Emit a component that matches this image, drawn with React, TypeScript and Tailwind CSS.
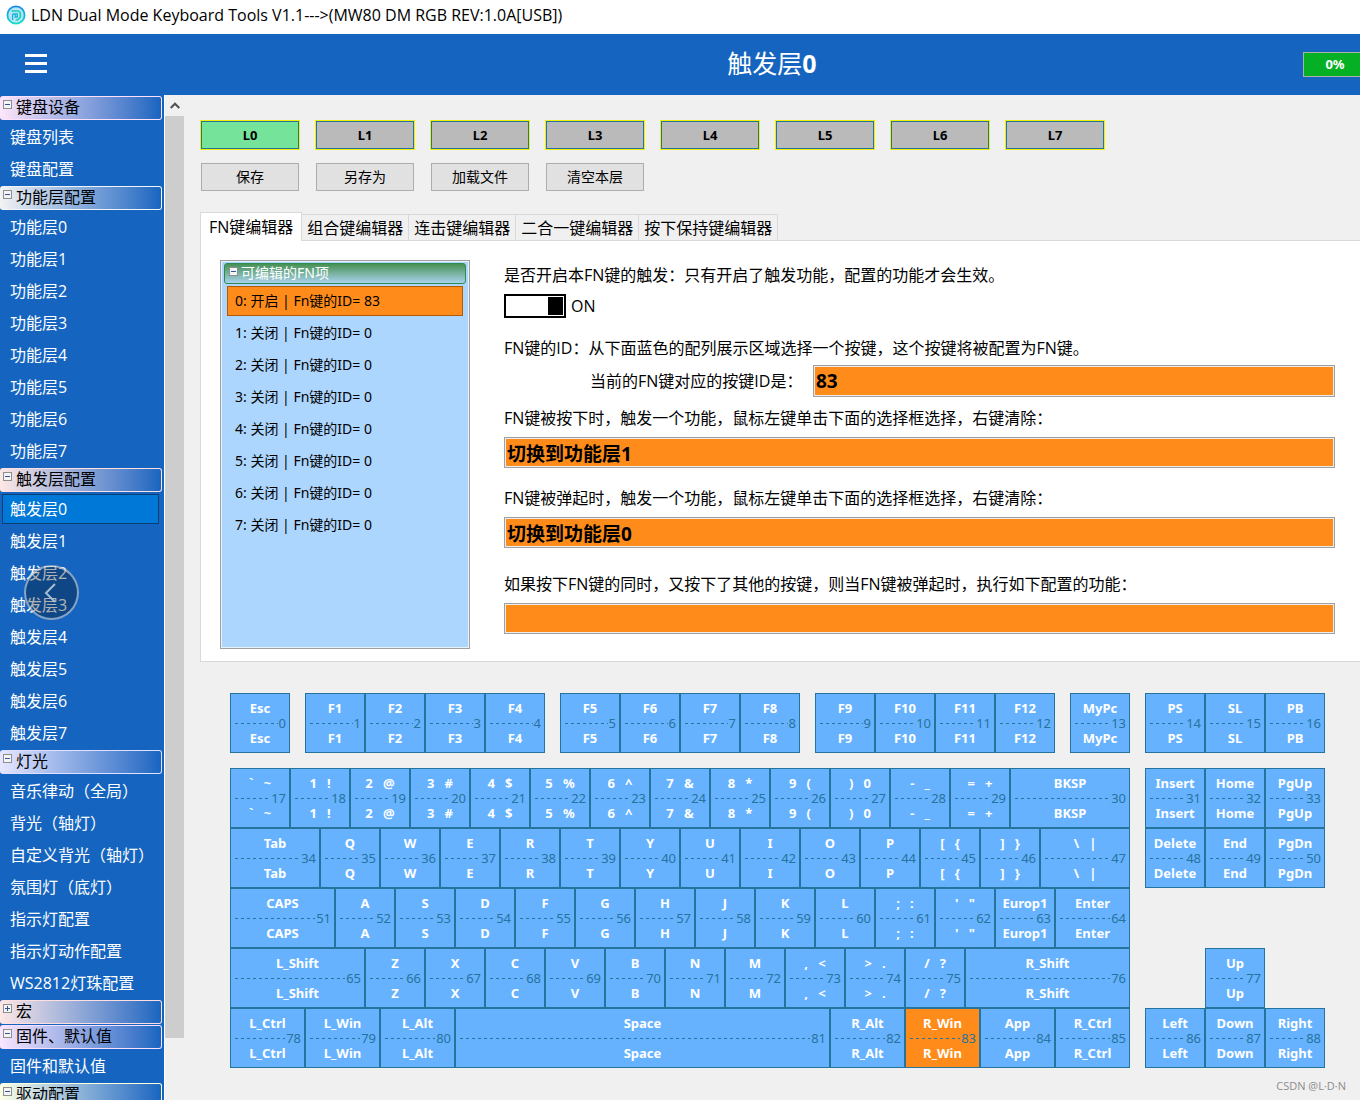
import { useState } from "react";
import type { ReactNode } from "react";

const ui = "font-['Open_Sans','Noto_Sans_CJK_SC',sans-serif]";
const dense = "font-['Noto_Sans','Noto_Sans_CJK_SC',sans-serif]";

type Group = { title: string; tint: string; edge: string; items: string[]; closed?: boolean };

const numbered = (name: string) => Array.from({ length: 8 }, (_, i) => name + i);

const groups: Group[] = [
  { title: "键盘设备", tint: "from-[#ffe6fa]", edge: "border-[#ffe0fa]", items: ["键盘列表", "键盘配置"] },
  { title: "功能层配置", tint: "from-[#f3f3f3]", edge: "border-[#f0f4f8]", items: numbered("功能层") },
  { title: "触发层配置", tint: "from-[#ffe8e6]", edge: "border-[#ffe0e0]", items: numbered("触发层") },
  {
    title: "灯光",
    tint: "from-[#e8e6ff]",
    edge: "border-[#dfe0ff]",
    items: ["音乐律动（全局）", "背光（轴灯）", "自定义背光（轴灯）", "氛围灯（底灯）", "指示灯配置", "指示灯动作配置", "WS2812灯珠配置"],
  },
  { title: "宏", tint: "from-[#ffe8e6]", edge: "border-[#ffe0e0]", items: [], closed: true },
  { title: "固件、默认值", tint: "from-[#fbe6ff]", edge: "border-[#fae0ff]", items: ["固件和默认值"] },
  { title: "驱动配置", tint: "from-[#fcffe6]", edge: "border-[#fcffe0]", items: [] },
];

function Expander({ closed }: { closed?: boolean }) {
  return (
    <svg viewBox="0 0 9 9" className="size-[9px] shrink-0" aria-hidden="true" shapeRendering="crispEdges">
      <rect x="0.5" y="0.5" width="8" height="8" rx="1" fill="#f4f4f4" stroke="#8e8f8f" />
      <path d={closed ? "M2 4.5h5M4.5 2v5" : "M2 4.5h5"} stroke="#33539c" />
    </svg>
  );
}

function Sidebar({ selected, onSelect }: { selected: string; onSelect: (s: string) => void }) {
  return (
    <nav className="w-[164px] shrink-0 overflow-hidden bg-[#1565c0] pt-px">
      {groups.map((g) => (
        <section key={g.title} className={`flex flex-col ${g.closed ? "" : "pb-px"}`}>
          <h2 className={`mb-px mr-0.5 flex h-6 rounded-[3px] border border-l-0 bg-linear-to-r to-[#1565c0] ${g.tint} ${g.edge}`}>
            <button className="flex w-full items-start gap-1 pl-[3px] text-left text-base leading-5 text-black">
              <span className="flex pt-[3px]">
                <Expander closed={g.closed} />
              </span>
              {g.title}
            </button>
          </h2>
          {g.items.map((item) => (
            <button
              key={item}
              onClick={() => onSelect(item)}
              className={`mx-0.5 my-px flex h-[30px] w-[157px] items-center whitespace-nowrap border pl-[7px] text-base text-white ${
                item === selected ? "border-[#0a3f73] bg-[#0078d7]" : "border-transparent"
              }`}
            >
              {item}
            </button>
          ))}
        </section>
      ))}
    </nav>
  );
}

function ScrollTrack() {
  return (
    <div className="flex w-5 shrink-0 flex-col border-l border-white bg-[#f0f0f0]">
      <button aria-label="向上滚动" className="flex h-[21px] items-center justify-center">
        <svg viewBox="0 0 10 7" className="h-[7px] w-2.5" fill="none" stroke="#505050" strokeWidth="2" aria-hidden="true">
          <path d="M0.7 6L5 1.7L9.3 6" />
        </svg>
      </button>
      <div className="h-[922px] bg-[#cdcdcd]" />
    </div>
  );
}

const tabs = ["FN键编辑器", "组合键编辑器", "连击键编辑器", "二合一键编辑器", "按下保持键编辑器"];

function Field({ id, value, height }: { id: string; value: string; height: string }) {
  return (
    <input
      id={id}
      defaultValue={value}
      className={`block min-w-0 flex-1 border border-[#a0a0a0] bg-[#ff8c1a] px-0.5 text-[19px] leading-none font-bold text-black outline-none inset-ring inset-ring-[#ececec] ${height}`}
    />
  );
}

function FnList() {
  const [row, setRow] = useState(0);
  return (
    <div className="h-[389px] w-[250px] shrink-0 border border-[#a0a0a0] bg-[#e8f2fb] p-px">
      <div className={`h-full bg-[#add6ff] px-0.5 pt-px text-sm ${dense}`}>
        <h3 className="flex h-[21px] items-start gap-[3px] rounded-[3px] border border-[#2f8a4e] bg-linear-to-b from-[#479153] to-[#a9d2ee] pl-1 text-sm leading-[18px] font-normal text-white">
          <span className="flex pt-[3px]">
            <Expander />
          </span>
          可编辑的FN项
        </h3>
        <ul className="px-[3px] pt-px">
          {Array.from({ length: 8 }, (_, i) => (
            <li key={i} className="py-px">
              <button
                onClick={() => setRow(i)}
                className={`flex h-[30px] w-full items-center whitespace-pre border pl-[7px] text-black ${
                  row === i ? "border-[#b35900] bg-[#ff8c1a]" : "border-transparent"
                }`}
              >
                {i === 0 ? "0: 开启 | Fn键的ID= 83" : `${i}: 关闭 | Fn键的ID= 0`}
              </button>
            </li>
          ))}
        </ul>
      </div>
    </div>
  );
}

function FnForm() {
  return (
    <div className="min-w-0 flex-1 text-base leading-6 text-black">
      <p className="pt-[3px]">是否开启本FN键的触发：只有开启了触发功能，配置的功能才会生效。</p>
      <label className="mt-[7px] flex h-6 w-fit cursor-pointer items-center gap-[5px]">
        <input type="checkbox" role="switch" defaultChecked className="peer sr-only" />
        <span className="flex h-6 w-[62px] justify-start border-2 border-black bg-white p-px peer-checked:justify-end">
          <span className="w-[15px] bg-black" />
        </span>
        ON
      </label>
      <p className="mt-[18px]">FN键的ID：从下面蓝色的配列展示区域选择一个按键，这个按键将被配置为FN键。</p>
      <div className="mt-[5px] flex items-center pl-[86px]">
        <label htmlFor="key-id" className="w-[223px] shrink-0">
          当前的FN键对应的按键ID是：
        </label>
        <Field id="key-id" value="83" height="h-8" />
      </div>
      <label htmlFor="press" className="mt-[9px] block">
        FN键被按下时，触发一个功能，鼠标左键单击下面的选择框选择，右键清除：
      </label>
      <div className="mt-[7px] flex">
        <Field id="press" value="切换到功能层1" height="h-[31px]" />
      </div>
      <label htmlFor="release" className="mt-[18px] block">
        FN键被弹起时，触发一个功能，鼠标左键单击下面的选择框选择，右键清除：
      </label>
      <div className="mt-[7px] flex">
        <Field id="release" value="切换到功能层0" height="h-[31px]" />
      </div>
      <label htmlFor="combo" className="mt-6 block">
        如果按下FN键的同时，又按下了其他的按键，则当FN键被弹起时，执行如下配置的功能：
      </label>
      <div className="mt-[7px] flex">
        <Field id="combo" value="" height="h-[31px]" />
      </div>
    </div>
  );
}

type Cell = [label: string, units: number] | number;

/* Widths are in quarter units of a standard key; a bare number is an empty gap. */
const rows: { first: number; cells: Cell[] }[] = [
  {
    first: 0,
    cells: [
      ["Esc", 4], 1, ["F1", 4], ["F2", 4], ["F3", 4], ["F4", 4], 1, ["F5", 4], ["F6", 4], ["F7", 4], ["F8", 4], 1,
      ["F9", 4], ["F10", 4], ["F11", 4], ["F12", 4], 1, ["MyPc", 4], 1, ["PS", 4], ["SL", 4], ["PB", 4],
    ],
  },
  {
    first: 17,
    cells: [
      ["`   ~", 4], ["1   !", 4], ["2   @", 4], ["3   #", 4], ["4   $", 4], ["5   %", 4], ["6   ^", 4], ["7   &", 4],
      ["8   *", 4], ["9   (", 4], [")   0", 4], ["-   _", 4], ["=   +", 4], ["BKSP", 8], 1, ["Insert", 4], ["Home", 4],
      ["PgUp", 4],
    ],
  },
  {
    first: 34,
    cells: [
      ["Tab", 6], ["Q", 4], ["W", 4], ["E", 4], ["R", 4], ["T", 4], ["Y", 4], ["U", 4], ["I", 4], ["O", 4], ["P", 4],
      ["[   {", 4], ["]   }", 4], ["\\   |", 6], 1, ["Delete", 4], ["End", 4], ["PgDn", 4],
    ],
  },
  {
    first: 51,
    cells: [
      ["CAPS", 7], ["A", 4], ["S", 4], ["D", 4], ["F", 4], ["G", 4], ["H", 4], ["J", 4], ["K", 4], ["L", 4],
      [";   :", 4], ["'   \"", 4], ["Europ1", 4], ["Enter", 5],
    ],
  },
  {
    first: 65,
    cells: [
      ["L_Shift", 9], ["Z", 4], ["X", 4], ["C", 4], ["V", 4], ["B", 4], ["N", 4], ["M", 4], [",   <", 4], [">   .", 4],
      ["/   ?", 4], ["R_Shift", 11], 5, ["Up", 4],
    ],
  },
  {
    first: 78,
    cells: [
      ["L_Ctrl", 5], ["L_Win", 5], ["L_Alt", 5], ["Space", 25], ["R_Alt", 5], ["R_Win", 5], ["App", 5], ["R_Ctrl", 5], 1,
      ["Left", 4], ["Down", 4], ["Right", 4],
    ],
  },
];

function Key({ label, id, units, active, onPick }: { label: string; id: number; units: number; active: boolean; onPick: () => void }) {
  return (
    <button
      onClick={onPick}
      style={{ gridColumn: `span ${units}` }}
      className={`flex h-[60px] min-w-0 flex-col justify-center border border-[#26739c] text-[13px] leading-[15px] whitespace-pre text-white ${
        active ? "bg-[#ff8c1a]" : "bg-[#66b2ff]"
      }`}
    >
      <span className="w-full text-center font-bold">{label}</span>
      <span className="flex w-full items-center gap-px pr-[3px] pl-1 text-[#26739c]">
        <svg className="h-px min-w-0 flex-1" aria-hidden="true" shapeRendering="crispEdges">
          <line x1="0" y1="0.5" x2="100%" y2="0.5" stroke="#26739c" strokeDasharray="3 3" />
        </svg>
        {id}
      </span>
      <span className="w-full text-center font-bold">{label}</span>
    </button>
  );
}

function Keyboard() {
  const [picked, setPicked] = useState(83);
  return (
    <div className={`mr-[35px] ml-[46px] pt-[31px] ${dense}`}>
      {rows.map((row, r) => {
        let next = row.first;
        return (
          <div key={r} className={`grid grid-cols-[repeat(73,minmax(0,1fr))] ${r === 0 ? "mb-[15px]" : ""}`}>
            {row.cells.map((cell, c): ReactNode => {
              if (typeof cell === "number") return <span key={c} style={{ gridColumn: `span ${cell}` }} />;
              const id = next++;
              return <Key key={c} label={cell[0]} units={cell[1]} id={id} active={picked === id} onPick={() => setPicked(id)} />;
            })}
          </div>
        );
      })}
    </div>
  );
}

export default function App() {
  const [page, setPage] = useState("触发层0");
  const [layer, setLayer] = useState(0);
  const [tab, setTab] = useState(0);
  return (
    <div className={`flex h-screen flex-col overflow-hidden bg-[#f0f0f0] text-black ${ui}`}>
      <header className="shrink-0">
        <div className="flex h-[34px] items-center gap-[5px] bg-white pb-1 pl-1.5">
          <svg viewBox="0 0 20 20" className="size-5" aria-hidden="true">
            <defs>
              <linearGradient id="ring" x1="0" y1="0" x2="0" y2="1">
                <stop offset="0" stopColor="#1787f0" />
                <stop offset="1" stopColor="#12e0c8" />
              </linearGradient>
            </defs>
            <circle cx="10" cy="10" r="8.6" fill="#b4e6f5" stroke="url(#ring)" strokeWidth="1.8" />
            <path d="M5.5 6H12.5L14.3 7.8V12.2L11.8 14.8H9.8" fill="none" stroke="#12d3b4" strokeWidth="1.6" />
            <path d="M6.6 15V9M6.6 9H11.3V12H9.2V9" fill="none" stroke="#1ab4d8" strokeWidth="1.3" />
          </svg>
          <span className="text-base leading-5">LDN Dual Mode Keyboard Tools V1.1---&gt;(MW80 DM RGB REV:1.0A[USB])</span>
        </div>
        <div className="grid h-[61px] grid-cols-[1fr_auto_1fr] items-center bg-[#1565c0]">
          <button aria-label="菜单" className="mb-0.5 ml-[25px] flex w-[22px] flex-col gap-[5px]">
            <span className="h-[3px] bg-white" />
            <span className="h-[3px] bg-white" />
            <span className="h-[3px] bg-white" />
          </button>
          <h1 className="pb-1 pl-[184px] text-[25px] leading-9 text-white">
            触发层<b>0</b>
          </h1>
          <output className={`flex h-[25px] w-[57px] items-center justify-center justify-self-end border border-r-0 border-[#a8b4a8] bg-[#06b025] pl-1.5 text-[13px] font-bold text-white ${dense}`}>
            0%
          </output>
        </div>
      </header>
      <div className="flex min-h-0 flex-1">
        <Sidebar selected={page} onSelect={setPage} />
        <ScrollTrack />
        <main className="min-w-0 flex-1 pt-[25px]">
          <div className="flex gap-[15px] pl-4">
            {Array.from({ length: 8 }, (_, i) => (
              <button
                key={i}
                onClick={() => setLayer(i)}
                className={`h-[30px] w-[100px] border border-[#f0f000] pt-0.5 text-[13px] font-bold inset-ring inset-ring-[#26739c] ${dense} ${
                  layer === i ? "bg-[#76e39b]" : "bg-[#bababa]"
                }`}
              >
                L{i}
              </button>
            ))}
          </div>
          <div className="mt-[13px] flex gap-[17px] pl-[17px]">
            {["保存", "另存为", "加载文件", "清空本层"].map((name) => (
              <button key={name} className="h-7 w-[98px] border border-[#adadad] bg-[#e1e1e1] text-sm">
                {name}
              </button>
            ))}
          </div>
          <div role="tablist" className="relative mt-[21px] flex items-end pl-4">
            {tabs.map((name, i) => (
              <button
                key={name}
                role="tab"
                aria-selected={tab === i}
                onClick={() => setTab(i)}
                className={`whitespace-nowrap border-[#d9d9d9] text-base ${
                  tab === i ? "-mb-px h-[29px] border border-b-0 bg-white px-2 leading-[26px]" : "h-[26px] border-t border-r px-[5px] leading-[26px]"
                }`}
              >
                {name}
              </button>
            ))}
          </div>
          <div className="ml-4 flex gap-[34px] border border-r-0 border-[#d9d9d9] bg-white pt-[19px] pr-[25px] pb-3 pl-[19px]">
            <FnList />
            <FnForm />
          </div>
          <Keyboard />
          <p className="mt-2.5 pr-[14px] text-right text-[11px] leading-4 text-[#8c8c8c]">CSDN @L·D·N</p>
        </main>
      </div>
      <button aria-label="上一张" className="fixed top-[565px] left-6 flex size-[55px] items-center justify-center rounded-full border-2 border-white/50 bg-black/30">
        <svg viewBox="0 0 12 20" className="mr-1 h-5 w-3" fill="none" stroke="#a5bbd6" strokeWidth="2" aria-hidden="true">
          <path d="M11 1L2 10L11 19" />
        </svg>
      </button>
    </div>
  );
}
